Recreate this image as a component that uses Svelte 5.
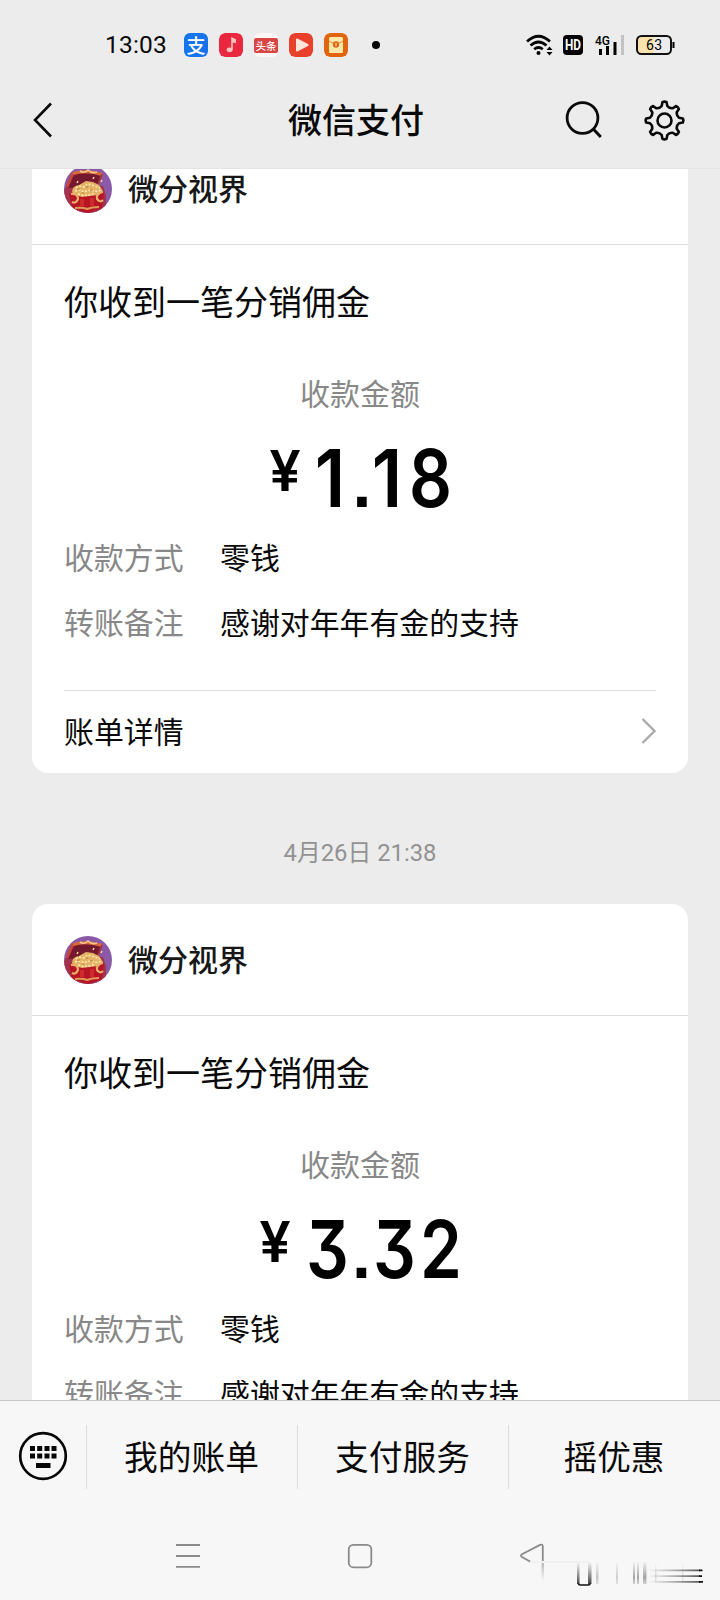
<script>
  const cards = [
    {
      time: '',
      start: 201,
      amount: [
        { ch: '1', w: 49 }, { ch: '.', w: 16 }, { ch: '1', w: 33 }, { ch: '8', w: 56 }
      ]
    },
    {
      time: '4月26日 21:38',
      start: 191,
      amount: [
        { ch: '3', w: 58, gap: 4 }, { ch: '.', w: 9 }, { ch: '3', w: 58 }, { ch: '2', w: 33 }
      ]
    }
  ];
  const c = 20.5;
  let gear = '';
  const pt = (r, deg) => {
    const a = (deg * Math.PI) / 180;
    return (c + r * Math.sin(a)).toFixed(2) + ' ' + (c - r * Math.cos(a)).toFixed(2);
  };
  for (let i = 0; i < 8; i++) {
    const d = i * 45;
    gear += (i ? 'L' : 'M') + pt(18.4, d - 6.5) + 'Q' + pt(19.4, d) + ' ' + pt(18.4, d + 6.5);
    gear += 'L' + pt(14.8, d + 11) + 'Q' + pt(12.8, d + 22.5) + ' ' + pt(14.8, d + 34);
  }
  gear += 'Z';
</script>

<div class="screen">
  <div class="status">
    <span class="clock">13:03</span>
    <div class="apps">
      <span class="app pay">支</span>
      <svg class="app" viewBox="0 0 24 24"><rect width="24" height="24" rx="6" fill="#e9283f" /><path d="M13 16.500V5.200l3.200 1.500v2.500L13 8.500" fill="#ffc1bd" stroke="#ffc1bd" stroke-width="1.600" /><ellipse cx="10.600" cy="16.800" rx="3" ry="2.400" fill="#ffc1bd" /></svg>
      <span class="app news"><b>头条</b></span>
      <svg class="app" viewBox="0 0 24 24"><rect width="24" height="24" rx="6" fill="#e8402a" /><path d="M8 6.500v11l10.500-5.500z" fill="#ffe4dc" stroke="#ffe4dc" stroke-width="2" stroke-linejoin="round" /></svg>
      <svg class="app" viewBox="0 0 24 24"><rect width="24" height="24" rx="6" fill="#e36410" /><rect x="5" y="4" width="14" height="16" rx="1.500" fill="#ffe9a8" /><path d="M5 8l7 4 7-4" fill="none" stroke="#e38a30" /><circle cx="12" cy="11.500" r="3.200" fill="#d9661a" /><path d="M12 9.800v3.400" stroke="#ffe9a8" /></svg>
    </div>
    <i class="dot"></i>
    <svg class="signals" width="152" height="24" viewBox="0 0 152 24">
      <g fill="none" stroke="#050505" stroke-width="2.700">
        <path d="M1 8.500Q12.500-2 24 8.500M4.500 12.500Q12.500 5.500 20.500 12.500M8.200 16.200Q12.500 12.800 16.800 16.200" />
      </g>
      <circle cx="12.500" cy="20" r="2" />
      <path d="M20.500 17l3-3.500 3 3.500zM20.500 19l3 3.500 3-3.500z" />
      <rect x="37" y="2" width="20" height="20" rx="4" />
      <text x="47" y="17" text-anchor="middle" font-size="14" font-weight="700" fill="#fff" textLength="16" lengthAdjust="spacingAndGlyphs">HD</text>
      <text x="69" y="11.500" font-size="13" font-weight="500" textLength="15" lengthAdjust="spacingAndGlyphs">4G</text>
      <path d="M73 16h3v6h-3zM80 13h3v9h-3zM87.500 9h3v13h-3z" />
      <path d="M95 2h3v20h-3z" fill="#c2c2c2" />
      <path d="M115 3h13v18h-13q-4 0-4-4v-10q0-4 4-4z" fill="#f9e2ae" />
      <rect x="111" y="3" width="34" height="18" rx="4.500" fill="none" stroke="#111" stroke-width="2" />
      <path d="M146.500 9h2v6h-2z" />
      <text x="128" y="17" text-anchor="middle" font-size="14" textLength="16">63</text>
    </svg>
  </div>

  <header>
    <svg class="back" width="20" height="36" viewBox="0 0 20 36"><path d="M18 1.500L2 18l16 16.500" fill="none" stroke="#0a0a0a" stroke-width="2.600" /></svg>
    <h1>微信支付</h1>
    <svg class="search" width="38" height="38" viewBox="0 0 38 38"><circle cx="17.500" cy="17" r="15.400" fill="none" stroke="#0a0a0a" stroke-width="2.800" /><path d="M28.300 28l7.500 8" stroke="#0a0a0a" stroke-width="3" /></svg>
    <svg class="gear" width="41" height="41" viewBox="0 0 41 41"><path d={gear} fill="none" stroke="#0a0a0a" stroke-width="2.600" stroke-linejoin="round" /><circle cx={c} cy={c} r="7" fill="none" stroke="#0a0a0a" stroke-width="2.600" /></svg>
  </header>

  <main>
    {#each cards as card}
      {#if card.time}<div class="time">{card.time}</div>{/if}
      <section>
        <div class="merchant">
          <svg width="48" height="48" viewBox="0 0 48 48">
            <defs><clipPath id="round"><circle cx="24" cy="24" r="24" /></clipPath></defs>
            <g clip-path="url(#round)">
              <rect width="48" height="48" fill="#8a5aa8" />
              <path d="M0 48V25l6-8 33 4 3 9v18z" fill="#a3324d" />
              <path d="M3 23L9 8Q23 4 38 9l-5 12z" fill="#74182f" />
              <path d="M3 22L9 8" stroke="#c6453b" stroke-width="3" />
              <path d="M9 8.500Q23 4.500 38 9.500" fill="none" stroke="#d8693d" stroke-width="3" />
              <path d="M16 6q4 3 8-1 4 4 9 2" fill="none" stroke="#f9c88a" stroke-width="1.600" />
              <path d="M38 9l-4 11" stroke="#a83840" stroke-width="2" />
              <path d="M5 28q8 5 35-1l-2 16-14 5-16-5z" fill="#b51525" />
              <path d="M8 27q0-6 7-7l7-4 7 1 6 3 4 6-4 4-9 1-8 1-7-2z" fill="#e3b265" />
              <path d="M12 23q4-3 8-1 3-4 8-2l8 3M11 26q5-2 9 1 5-3 10-1 4 1 7-1M14 29q9 3 17-1" fill="none" stroke="#ffe9b4" stroke-width="1.600" stroke-dasharray="2 1.500" />
              <path d="M13 24h3M22 22h2M26 25h3M18 28h2" stroke="#b87930" stroke-width="1.200" />
              <path d="M13 18l1-2M29 14l1-2M37 17l1-2" stroke="#ffd891" stroke-width="1.500" />
              <path d="M7 29q7-1 7 5-2 5-6 3M39 27q-7 1-6 7 3 4 6 1" fill="none" stroke="#e7b06a" stroke-width="2.200" />
              <path d="M18 34v7M28 33v8" stroke="#cf2b2b" stroke-width="4" />
              <path d="M11 43q8-1 12 1 5-2 12-2" fill="none" stroke="#e09a55" stroke-width="2" />
            </g>
          </svg>
          <h2>微分视界</h2>
        </div>
        <div class="body">
          <h3>你收到一笔分销佣金</h3>
          <div class="label">收款金额</div>
          <div class="amount" style="padding-left:{card.start}px"><span class="yen">¥</span>{#each card.amount as d}<span class="digit" class:point={d.ch === '.'} class:one={d.ch === '1'} style="width:{d.w}px;margin-left:{d.gap ?? 0}px"><span>{d.ch}</span></span>{/each}</div>
          <dl>
            <dt>收款方式</dt><dd>零钱</dd>
            <dt>转账备注</dt><dd>感谢对年年有金的支持</dd>
          </dl>
          <div class="detail">
            <span>账单详情</span>
            <svg width="16" height="28" viewBox="0 0 16 28"><path d="M2.500 2l12 12-12 12" fill="none" stroke="#aaa" stroke-width="2.400" /></svg>
          </div>
        </div>
      </section>
    {/each}
  </main>

  <footer>
    <div class="key"><svg width="50" height="50" viewBox="0 0 50 50"><circle cx="25" cy="25" r="22.800" fill="none" stroke="#060606" stroke-width="2.700" /><path d="M12 15h5v5h-5zM19.200 15h5v5h-5zM26.500 15h5v5h-5zM33.500 15h5v5h-5zM12 22.500h5v5h-5zM19.200 22.500h5v5h-5zM26.500 22.500h5v5h-5zM33.500 22.500h5v5h-5zM18 32h14.500v5H18z" fill="#060606" /></svg></div>
    <div class="tab"><span>我的账单</span></div>
    <div class="tab"><span>支付服务</span></div>
    <div class="tab"><span>摇优惠</span></div>
  </footer>
  <nav>
    <svg width="720" height="88" viewBox="0 0 720 88">
      <defs>
        <linearGradient id="down" x1="0" y1="0" x2="0" y2="1"><stop offset="0" stop-color="#555" stop-opacity="0" /><stop offset="1" stop-color="#444" /></linearGradient>
        <linearGradient id="mid" x1="0" y1="0" x2="0" y2="1"><stop offset="0" stop-color="#777" stop-opacity=".05" /><stop offset=".7" stop-color="#777" stop-opacity=".65" /><stop offset="1" stop-color="#777" stop-opacity=".3" /></linearGradient>
        <linearGradient id="right"><stop offset="0" stop-color="#777" stop-opacity="0" /><stop offset="1" stop-color="#555" /></linearGradient>
        <linearGradient id="fade" x1="0" y1="0" x2="0" y2="1"><stop offset="0" stop-color="#888" stop-opacity=".6" /><stop offset="1" stop-color="#888" stop-opacity="0" /></linearGradient>
      </defs>
      <g fill="none" stroke="#8b8b8b" stroke-width="1.800">
        <path d="M176 33h24M176 44h24M176 54.800h24" />
        <rect x="348.800" y="32.800" width="22.500" height="22.500" rx="4.500" />
        <path d="M530.500 49.800L522 45q-2-1.300 0-2.800l18-9.300q2.800-1 2.800 1.600V49.500" />
      </g>
      <path d="M541.500 49h2.500v20h-2.500z" fill="url(#fade)" />
      <path d="M530 49h60v2h-60z" fill="#f1f1f1" />
      <path d="M577 50h2.500v22H577zM588 50h3.500v22H588z" fill="url(#down)" />
      <path d="M578.500 71.500q0 1.500 2 1.500h7.500q2 0 2-1.500" stroke="#111" fill="none" stroke-width="1.500" />
      <g fill="url(#mid)">
        <rect x="596" y="50" width="2.500" height="22" opacity=".6" />
        <rect x="616" y="50" width="2" height="22" opacity=".5" />
        <rect x="633" y="50" width="2" height="22" />
        <rect x="637" y="50" width="2" height="22" />
        <rect x="643" y="50" width="3.500" height="22" />
        <rect x="655" y="52" width="1.500" height="18" opacity=".4" />
        <rect x="682" y="52" width="1.500" height="18" opacity=".3" />
      </g>
      <path d="M648 57.500h52v1.800h-52zM648 63.200h52V65h-52zM648 69h52v1.800h-52z" fill="url(#right)" />
      <path d="M699 57.500h3.500v1.800H699zM699 63.200h3V65h-3zM699 69h4v1.800h-4z" fill="#111" />
    </svg>
  </nav>
</div>

<style>
  :global(body) { margin: 0; }
  .screen { width: 720px; height: 1600px; overflow: hidden; background: #ececec; display: flex; flex-direction: column; font-family: Roboto, "Noto Sans CJK SC", sans-serif; color: #0a0a0a; }
  h1, h2, h3, dl, dd { margin: 0; font-family: "Noto Sans CJK SC", sans-serif; }
  svg { display: block; flex: none; }
  .status { height: 72px; flex: none; display: flex; align-items: center; padding: 18px 46px 0 105px; box-sizing: border-box; }
  .clock { width: 79px; font-size: 24.500px; line-height: 28px; letter-spacing: .2px; }
  .apps { display: flex; gap: 11px; }
  .app { width: 24px; height: 24px; border-radius: 6px; }
  .pay { background: #1574ec; color: #fff; font: 500 19px/23px "Noto Sans CJK SC", sans-serif; text-align: center; }
  .news { background: #fbf7f6; display: flex; align-items: center; }
  .news b { background: #d94444; color: #fff; width: 24px; font: 500 10.500px/15px "Noto Sans CJK SC", sans-serif; text-align: center; border-radius: 2px; }
  .dot { width: 8px; height: 8px; border-radius: 50%; background: #050505; margin-left: 24px; }
  .signals { margin-left: auto; margin-right: -4px; }
  header { height: 97px; flex: none; display: flex; align-items: center; border-bottom: 1px solid #e4e4e4; box-sizing: border-box; padding: 0 35px 0 33px; }
  h1 { font-size: 34px; font-weight: 500; line-height: 50px; margin: 0 0 2px 235px; }
  .search { margin-left: auto; }
  .gear { margin-left: 41px; }
  main { height: 1231px; flex: none; overflow: hidden; padding: 0 32px; box-sizing: border-box; }
  section { height: 640px; background: #fff; border-radius: 16px; overflow: hidden; }
  section:first-child { margin-top: -36px; }
  .merchant { height: 111px; border-bottom: 1px solid #dedede; display: flex; align-items: center; gap: 16px; padding-left: 32px; }
  h2 { font-size: 30px; font-weight: 500; line-height: 44px; padding-bottom: 3px; color: #181818; }
  .body { padding: 0 32px; }
  h3 { font-size: 34px; font-weight: 400; line-height: 50px; padding-top: 31px; }
  .label { font: 30px/44px "Noto Sans CJK SC", sans-serif; margin-top: 44px; text-align: center; color: #888; }
  .amount { height: 80px; margin-top: 24px; display: flex; font: 600 80px/80px Inter, sans-serif; font-feature-settings: "cv09"; color: #000; }
  .amount .yen { width: 40px; text-align: center; font-size: 56px; line-height: 67px; }
  .digit { flex: none; display: flex; justify-content: center; }
  .digit > span { transform: scaleX(.84); }
  .digit.one > span { transform: scaleX(.9); }
  .digit.point { font: 700 68px/91px "Liberation Sans", sans-serif; }
  .digit.point > span { transform: none; }
  dl { display: grid; grid-template-columns: 156px 1fr; font-size: 29.900px; line-height: 44px; row-gap: 21px; margin-top: 16px; }
  dt { color: #888; }
  .detail { margin-top: 47px; height: 80px; border-top: 1px solid #dedede; display: flex; align-items: center; justify-content: space-between; font: 29.900px/44px "Noto Sans CJK SC", sans-serif; }
  .detail span { padding-bottom: 3px; }
  .time { height: 131px; line-height: 160px; text-align: center; font-size: 23.800px; color: #929292; }
  footer { height: 112px; flex: none; box-sizing: border-box; border-top: 1px solid #c9c9c9; background: #f7f7f7; display: grid; grid-template-columns: 86px 211px 211px 212px; align-items: center; }
  .key { padding: 0 0 1px 18px; }
  .tab { height: 64px; border-left: 1px solid #dcdcdc; text-align: center; font: 400 33.700px/61px "Noto Sans CJK SC", sans-serif; }
  .tab span { margin-right: 1px; }
  nav { height: 88px; flex: none; background: #f7f7f7; }
</style>
